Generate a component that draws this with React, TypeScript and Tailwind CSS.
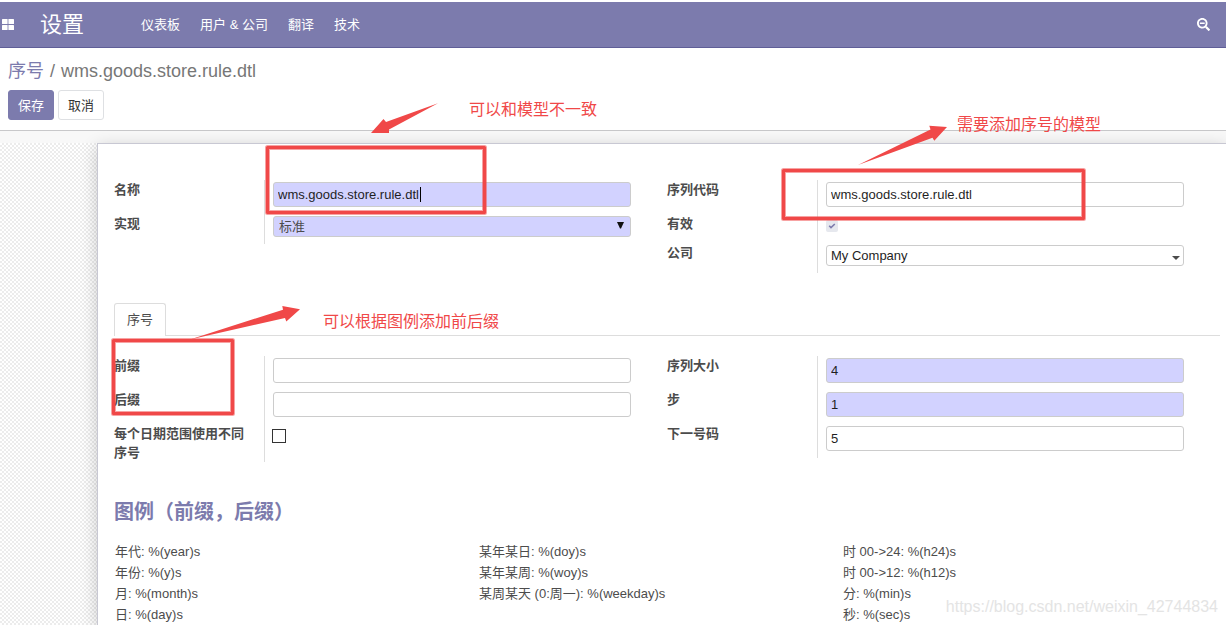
import { FC, ReactNode } from 'react';
import { FaSearchMinus } from 'react-icons/fa';

const menuItems = ['仪表板', '用户 & 公司', '翻译', '技术'];

const legend = [
  ['年代: %(year)s', '某年某日: %(doy)s', '时 00->24: %(h24)s'],
  ['年份: %(y)s', '某年某周: %(woy)s', '时 00->12: %(h12)s'],
  ['月: %(month)s', '某周某天 (0:周一): %(weekday)s', '分: %(min)s'],
  ['日: %(day)s', '', '秒: %(sec)s'],
];

const Navbar: FC = () => (
  <nav className="mt-0.5 flex h-[46px] items-center border-b border-[#5f5e97] bg-[#7c7bad] text-white">
    <button type="button" aria-label="应用" className="pl-0.5">
      <svg width="12" height="11" viewBox="0 0 12 11" fill="currentColor">
        <rect x="0" y="0" width="5.6" height="5" rx="0.6" />
        <rect x="6.4" y="0" width="5.6" height="5" rx="0.6" />
        <rect x="0" y="6" width="5.6" height="5" rx="0.6" />
        <rect x="6.4" y="6" width="5.6" height="5" rx="0.6" />
      </svg>
    </button>
    <a href="#settings" className="ml-[26px] text-[22px] leading-8">
      设置
    </a>
    <ul className="ml-[47px] flex">
      {menuItems.map((item) => (
        <li key={item}>
          <a href="#menu" className="px-2.5">
            {item}
          </a>
        </li>
      ))}
    </ul>
    <button type="button" aria-label="搜索" className="mr-4 ml-auto">
      <FaSearchMinus size={13} />
    </button>
  </nav>
);

const ControlPanel: FC = () => (
  <header className="border-b border-[#c8c8ca] px-2 pt-2.5 pb-2.5">
    <ol className="flex gap-1.5 text-lg leading-[26px] text-[#777]">
      <li>
        <a href="#sequences" className="text-[#7c7bad]">
          序号
        </a>
      </li>
      <li>/</li>
      <li>wms.goods.store.rule.dtl</li>
    </ol>
    <div className="mt-1.5 flex gap-1">
      <button
        type="button"
        className="h-[30px] rounded-[3px] border border-[#7c7bad] bg-[#7c7bad] px-[9px] text-white"
      >
        保存
      </button>
      <button
        type="button"
        className="h-[30px] rounded-[3px] border border-[#dee0e3] bg-white px-[9px] text-[#333]"
      >
        取消
      </button>
    </div>
  </header>
);

const Row: FC<{ id: string; label: string; children: ReactNode }> = ({
  id,
  label,
  children,
}) => (
  <div className="flex">
    <label htmlFor={id} className="w-[150px] shrink-0 pr-4 font-bold">
      {label}
    </label>
    <div className="flex-1 border-l border-[#ddd] pt-0.5 pb-[7px] pl-2">
      {children}
    </div>
  </div>
);

const TextField: FC<{
  id: string;
  label: string;
  value?: string;
  required?: boolean;
  caret?: boolean;
}> = ({ id, label, value = '', required, caret }) => (
  <Row id={id} label={label}>
    <div className="relative">
      <input
        id={id}
        type="text"
        defaultValue={value}
        className={`block h-[25px] w-full rounded-[3px] border border-[#ccc] px-1 text-[#1f1f1f] outline-none ${
          required ? 'bg-[#d2d2ff]' : 'bg-white'
        }`}
      />
      {caret && (
        <span className="absolute top-[5px] left-[147px] h-[15px] w-px bg-black" />
      )}
    </div>
  </Row>
);

const Group: FC<{ children: ReactNode }> = ({ children }) => (
  <div className="flex flex-col self-start pr-9">{children}</div>
);

const GeneralFields: FC = () => (
  <div className="grid grid-cols-2">
    <Group>
      <TextField
        id="name"
        label="名称"
        value="wms.goods.store.rule.dtl"
        required
        caret
      />
      <Row id="implementation" label="实现">
        <div className="relative">
          <select
            id="implementation"
            className="block h-[21px] w-full appearance-none rounded-[3px] border border-[#ccc] bg-[#d2d2ff] px-[5px] leading-5"
          >
            <option>标准</option>
          </select>
          <svg
            className="pointer-events-none absolute top-1.5 right-[7px] text-[#111]"
            width="7"
            height="7"
            viewBox="0 0 7 7"
            fill="currentColor"
          >
            <path d="M0 0h7L4 6.5H3z" />
          </svg>
        </div>
      </Row>
    </Group>
    <Group>
      <TextField id="code" label="序列代码" value="wms.goods.store.rule.dtl" />
      <Row id="active" label="有效">
        <div className="relative h-5 pt-1">
          <input
            id="active"
            type="checkbox"
            defaultChecked
            disabled
            className="block size-3 appearance-none rounded-xs bg-[#e6e8ee]"
          />
          <svg
            className="pointer-events-none absolute top-1 left-0 text-[#7c7bad]"
            width="12"
            height="12"
            viewBox="0 0 12 12"
            fill="none"
            stroke="currentColor"
            strokeWidth="1.6"
          >
            <path d="M3.2 5.8l1.8 1.8L8.8 4" />
          </svg>
        </div>
      </Row>
      <Row id="company" label="公司">
        <div className="relative">
          <select
            id="company"
            className="block h-[21px] w-full appearance-none rounded-[3px] border border-[#ccc] bg-white px-1 leading-[19px] text-[#1f1f1f]"
          >
            <option>My Company</option>
          </select>
          <svg
            className="pointer-events-none absolute right-1 bottom-1.5"
            width="8"
            height="4"
            viewBox="0 0 8 4"
            fill="currentColor"
          >
            <path d="M0 0h8L4 4z" />
          </svg>
        </div>
      </Row>
    </Group>
  </div>
);

const SequenceFields: FC = () => (
  <div className="mt-5 grid grid-cols-2">
    <Group>
      <TextField id="prefix" label="前缀" />
      <TextField id="suffix" label="后缀" />
      <Row id="date-range" label="每个日期范围使用不同序号">
        <input
          id="date-range"
          type="checkbox"
          className="-ml-px mt-[3px] block size-3.5 appearance-none border border-[#333] bg-white"
        />
      </Row>
    </Group>
    <Group>
      <TextField id="padding" label="序列大小" value="4" required />
      <TextField id="step" label="步" value="1" required />
      <TextField id="next" label="下一号码" value="5" />
    </Group>
  </div>
);

const Sheet: FC = () => (
  <section className="ml-[97px] flex-1 border-t border-l border-[#c8c8d3] bg-white pt-9 pr-1.5 pl-4 shadow-[0_4px_16px_rgba(0,0,0,0.2)]">
    <GeneralFields />
    <div role="tablist" className="mt-[30px] flex border-b border-[#ddd]">
      <button
        type="button"
        role="tab"
        aria-selected="true"
        className="-mb-px h-[33px] rounded-t-[3px] border border-b-0 border-[#ddd] bg-white px-3 pb-0.5"
      >
        序号
      </button>
    </div>
    <SequenceFields />
    <h2 className="mt-9 text-xl leading-7 font-bold text-[#7c7bad]">
      图例（前缀，后缀）
    </h2>
    <div className="mt-[15px] pr-3.5">
      <table className="w-full table-fixed">
        <tbody>
          {legend.map((row) => (
            <tr key={row[0]} className="h-[21px]">
              {row.map((cell, i) => (
                <td key={i} className="pl-px">
                  {cell}
                </td>
              ))}
            </tr>
          ))}
        </tbody>
      </table>
    </div>
  </section>
);

// Red notes drawn over the form
const Annotations: FC = () => (
  <div className="pointer-events-none absolute inset-0 text-base leading-5 text-[#f04848]">
    <svg
      className="absolute top-0 left-0"
      width="1226"
      height="625"
      viewBox="0 0 1226 625"
      fill="none"
    >
      {[
        [267.5, 147.5, 217, 65],
        [783.5, 170.5, 300, 48],
        [113.5, 340.5, 119, 73],
      ].map(([x, y, width, height]) => (
        <g key={x} stroke="#f04848" strokeLinejoin="round">
          <rect
            x={x}
            y={y}
            width={width}
            height={height}
            strokeWidth="5"
            strokeOpacity="0.5"
          />
          <rect x={x} y={y} width={width} height={height} strokeWidth="3" />
        </g>
      ))}
      <g fill="#f04848">
        <path d="M371 133L383.5 119L386 122L438 103.3L389 129.5V133z" />
        <path d="M947 127L929.3 125.7L930.5 129.5L858 165L932.5 137.7L934.3 140.7z" />
        <path d="M300 309.3L282.3 306L283 309.7L190 339.5L285 318L286.3 321.5z" />
      </g>
    </svg>
    <p className="absolute top-[100px] left-[469px]">可以和模型不一致</p>
    <p className="absolute top-[115px] left-[957px]">需要添加序号的模型</p>
    <p className="absolute top-[312px] left-[323px]">可以根据图例添加前后缀</p>
    <p className="absolute top-[597px] right-2 text-[#e4e4e4]">
      https://blog.csdn.net/weixin_42744834
    </p>
  </div>
);

const App: FC = () => (
  <div className="relative flex min-h-screen flex-col overflow-hidden bg-white font-['Liberation_Sans','Noto_Sans_CJK_SC',sans-serif] text-[13px] leading-[19px] text-[#4c4c4c]">
    <Navbar />
    <ControlPanel />
    <main className="flex flex-1 flex-col bg-[repeating-conic-gradient(#ececec_0_25%,#fff_0_50%)] bg-[length:4px_4px]">
      <div className="h-3 bg-[#f8f8f8]" />
      <Sheet />
    </main>
    <Annotations />
  </div>
);

export default App;
